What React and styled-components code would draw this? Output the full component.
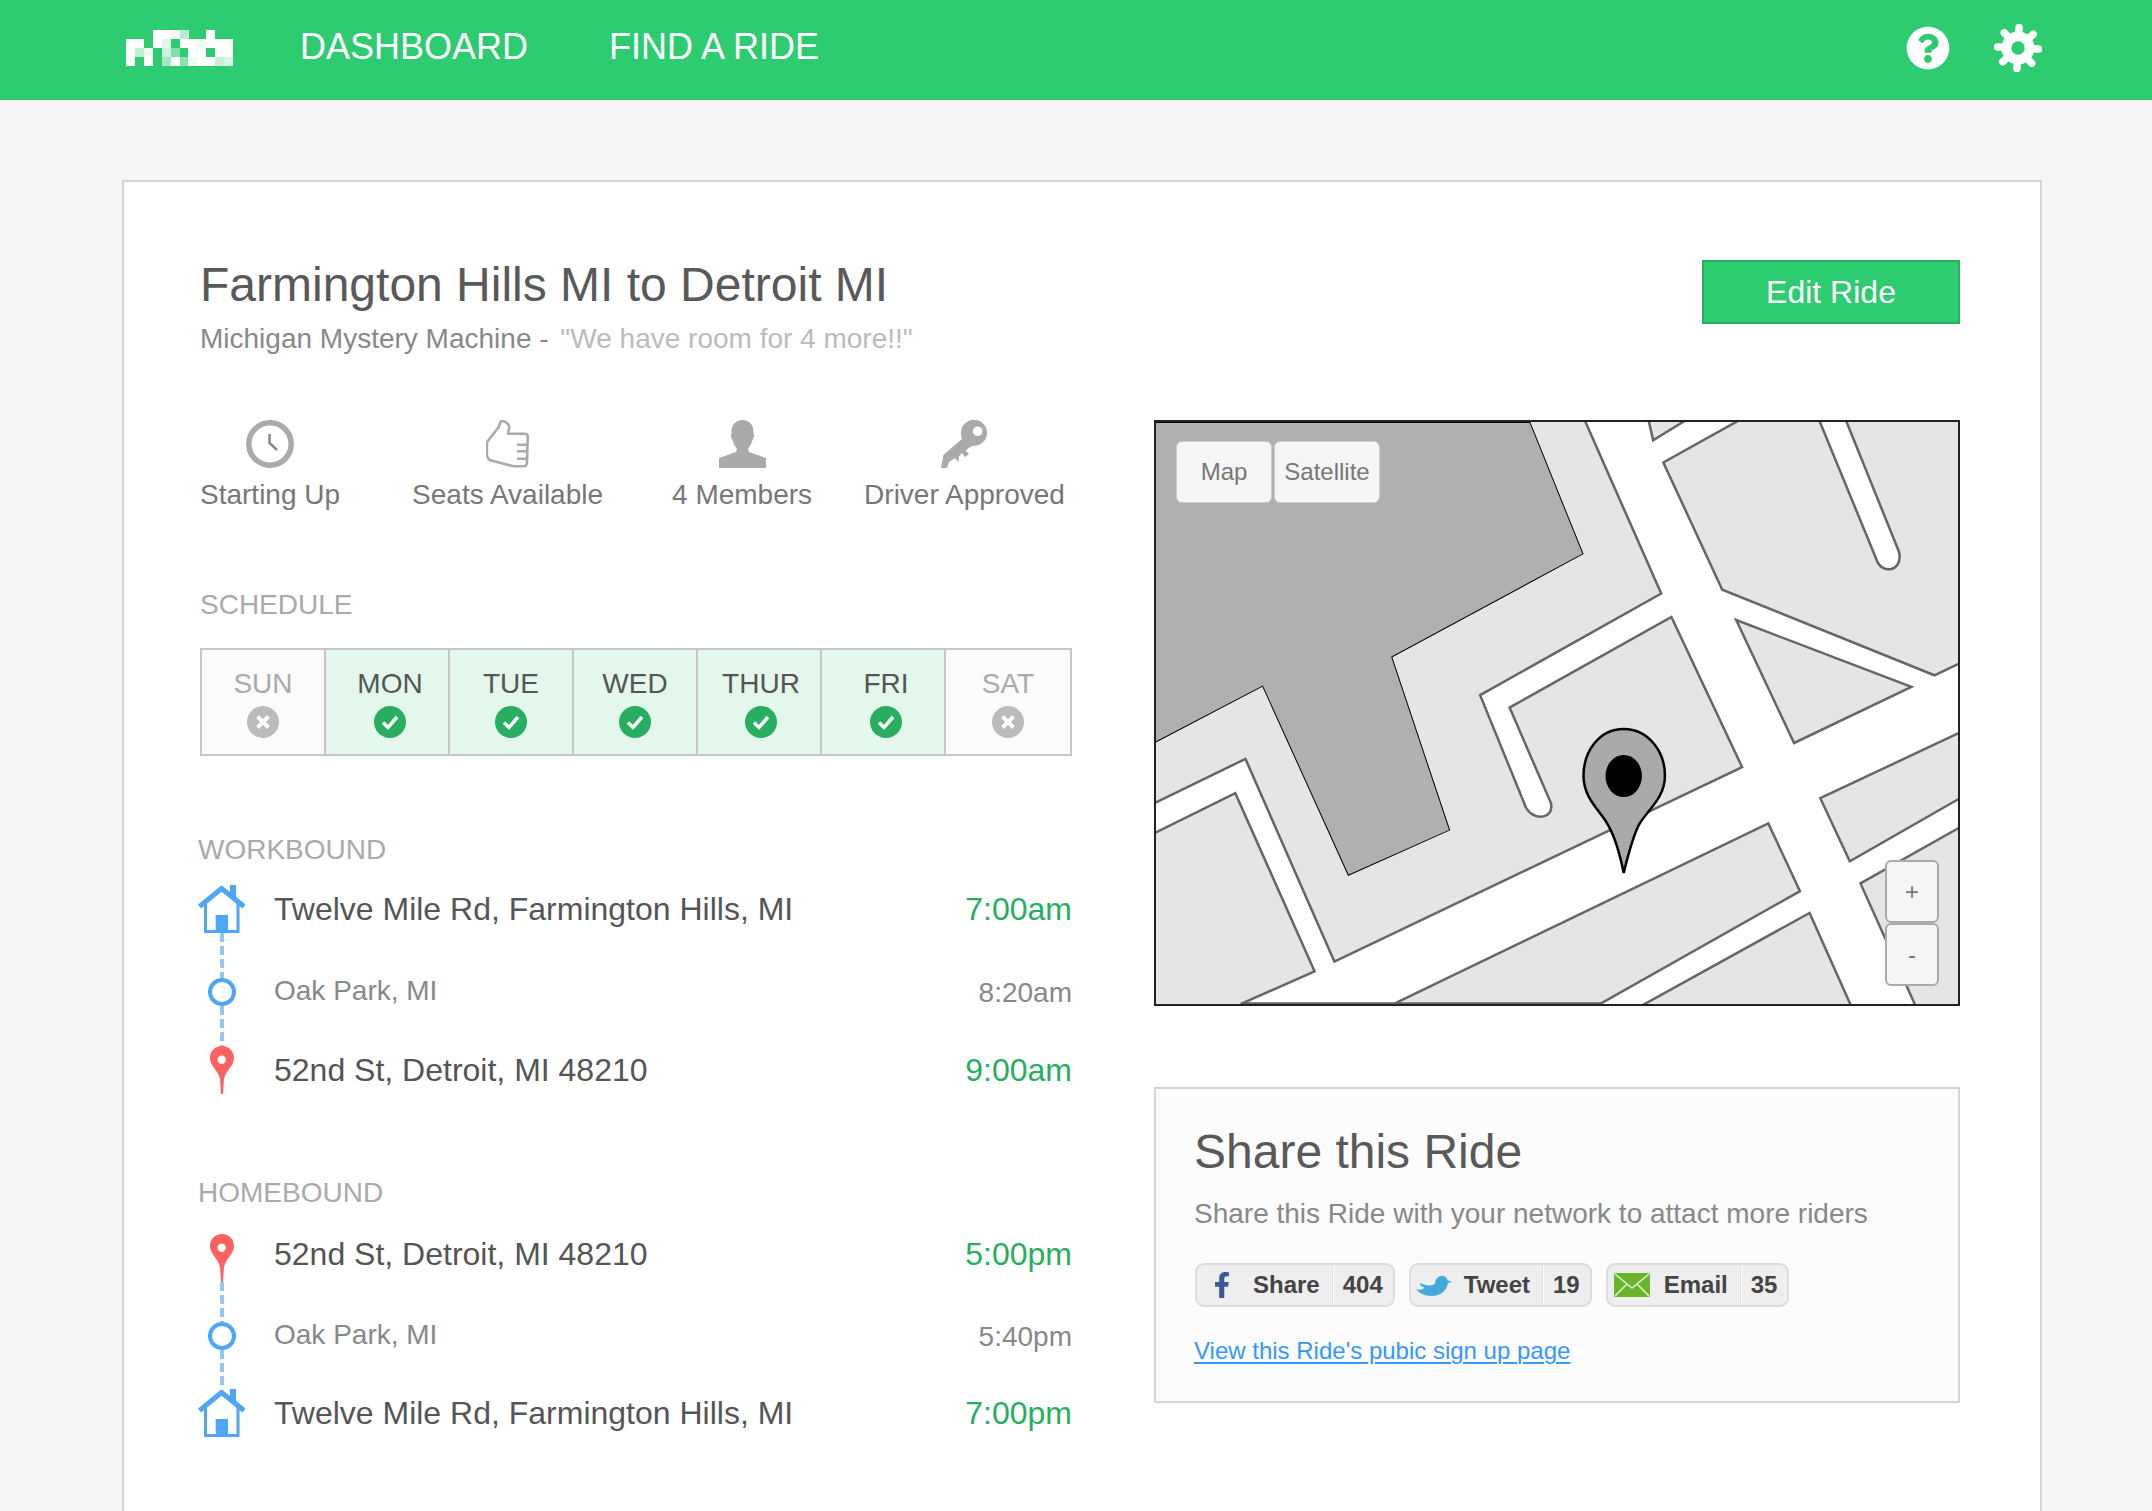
import React from "react";
import styled, { createGlobalStyle } from "styled-components";
import { FaFacebookF, FaQuestionCircle } from "react-icons/fa";

const GlobalStyle = createGlobalStyle`
  * {
    box-sizing: border-box;
  }
  html,
  body {
    margin: 0;
    height: 100%;
    overflow: hidden;
    background: #f5f5f5;
    font-family: "Liberation Sans", Arial, sans-serif;
  }
`;

const GRAY = "#aaaaaa";
const BLUE = "#4da6f8";
const NAV_GREEN = "#2ecc71";

const Nav = styled.nav`
  height: 100px;
  padding: 0 110px 4px 126px;
  display: flex;
  align-items: center;
  background: ${NAV_GREEN};
`;

const NavLink = styled.a`
  margin-left: ${(p) => p.$left}px;
  padding-bottom: 2px;
  font-size: 36px;
  line-height: 38px;
  color: #fff;
`;

const NavIcons = styled.div`
  margin-left: auto;
  display: flex;
  align-items: center;
  gap: 44px;
  color: #fff;
`;

const Card = styled.main`
  margin: 80px 0 0 122px;
  width: 1920px;
  min-height: 1400px;
  padding: 75px 80px 0 76px;
  background: #fff;
  border: 2px solid #d5d5d5;
`;

const Header = styled.header`
  display: flex;
  justify-content: space-between;
  align-items: flex-start;
  margin-bottom: 64px;
`;

const Title = styled.h1`
  margin: 0 0 9px;
  font-size: 48px;
  line-height: 56px;
  font-weight: 400;
  color: #595959;
`;

const Subtitle = styled.p`
  margin: 0;
  font-size: 28px;
  line-height: 34px;
  color: #888;
`;

const Quote = styled.span`
  margin-left: 4px;
  color: #bbb;
`;

const EditButton = styled.button`
  margin-top: 3px;
  width: 258px;
  height: 64px;
  padding: 0;
  background: ${NAV_GREEN};
  border: 2px solid #27ae60;
  font-family: inherit;
  font-size: 32px;
  color: #fff;
`;

const Columns = styled.div`
  display: flex;
  justify-content: space-between;
  align-items: flex-start;
`;

const LeftColumn = styled.section`
  width: 872px;
`;

const RightColumn = styled.aside`
  width: 806px;
`;

const StatusRow = styled.div`
  display: flex;
`;

const Status = styled.div`
  margin-right: ${(p) => p.$gap}px;
  display: flex;
  flex-direction: column;
  align-items: center;
  gap: 10px;
`;

const StatusIcon = styled.svg`
  display: block;
  height: 48px;
  width: ${(p) => p.$w}px;
`;

const StatusLabel = styled.span`
  font-size: 28px;
  line-height: 34px;
  color: #777;
  white-space: nowrap;
`;

const SectionLabel = styled.h2`
  margin: ${(p) => p.$top}px 0 ${(p) => p.$bottom}px;
  font-size: 28px;
  line-height: 34px;
  font-weight: 400;
  color: ${GRAY};
`;

const Schedule = styled.div`
  display: grid;
  grid-template-columns: repeat(7, 1fr);
  height: 108px;
  border: 2px solid #c6c6c6;
`;

const Day = styled.div`
  padding-top: 17px;
  padding-left: ${(p) => p.$shift * 2}px;
  display: flex;
  flex-direction: column;
  align-items: center;
  gap: 5px;
  background: ${(p) => (p.$on ? "#e3f7ec" : "#fbfbfb")};
  border-right: 2px solid #c6c6c6;
  font-size: 28px;
  line-height: 34px;
  color: ${(p) => (p.$on ? "#555" : "#aaa")};
  &:last-child {
    border-right: 0;
  }
`;

const RouteBlock = styled.div`
  margin-left: -2px;
  width: 874px;
`;

const Stop = styled.div`
  display: flex;
  align-items: center;
  height: ${(p) => (p.$minor ? 28 : 48)}px;
`;

const StopIcon = styled.div`
  width: 76px;
  flex: none;
`;

const StopText = styled.div`
  flex: 1;
  display: flex;
  justify-content: space-between;
  margin-bottom: ${(p) => (p.$lift ? 8 : 0)}px;
  font-size: ${(p) => (p.$minor ? 28 : 32)}px;
  line-height: ${(p) => (p.$minor ? 28 : 40)}px;
  color: ${(p) => (p.$minor ? "#888" : "#555")};
`;

const Time = styled.span`
  margin-top: ${(p) => (p.$minor ? 2 : 0)}px;
  color: ${(p) => (p.$minor ? "#888" : "#27ae60")};
`;

const Connector = styled.div`
  margin-left: 22px;
  width: 4px;
  height: ${(p) => p.$h}px;
  background: repeating-linear-gradient(to bottom, #90c8f8 0 9px, transparent 9px 13px);
`;

const Waypoint = styled.div`
  margin-left: 10px;
  width: 28px;
  height: 28px;
  border: 4px solid ${BLUE};
  border-radius: 50%;
`;

const MapBox = styled.div`
  position: relative;
  height: 586px;
  background: #fff;
  border: 2px solid #222;
  overflow: hidden;
`;

const MapDrawing = styled.svg`
  display: block;
  width: 100%;
  height: 100%;
`;

const MapTabs = styled.div`
  position: absolute;
  top: 19px;
  left: 20px;
  display: flex;
  gap: 2px;
`;

const MapTab = styled.div`
  width: ${(p) => p.$w}px;
  height: 62px;
  display: flex;
  align-items: center;
  justify-content: center;
  background: #f5f5f5;
  border: 1px solid #ccc;
  border-radius: 6px;
  font-size: 24px;
  color: #777;
`;

const ZoomControl = styled.div`
  position: absolute;
  right: 19px;
  bottom: 18px;
  display: flex;
  flex-direction: column;
`;

const ZoomButton = styled.div`
  width: 54px;
  height: 63px;
  display: flex;
  align-items: center;
  justify-content: center;
  background: #f5f5f5;
  border: 2px solid #aaa;
  border-radius: 6px;
  font-size: 24px;
  color: #777;
`;

const ShareBox = styled.div`
  margin-top: 81px;
  height: 316px;
  padding: 35px 0 0 38px;
  background: #fcfcfc;
  border: 2px solid #d5d5d5;
`;

const ShareTitle = styled.h2`
  margin: 0 0 17px;
  font-size: 48px;
  line-height: 56px;
  font-weight: 400;
  color: #595959;
`;

const ShareText = styled.p`
  margin: 0 0 32px;
  font-size: 28px;
  line-height: 34px;
  color: #888;
`;

const ShareButtons = styled.div`
  display: flex;
  gap: 14px;
  margin: 0 0 28px 1px;
`;

const ShareButton = styled.div`
  display: flex;
  align-items: center;
  height: 44px;
  background: #eee;
  border: 2px solid #ddd;
  border-radius: 9px;
  font-size: 24px;
  font-weight: 700;
  color: #444;
`;

const ShareIcon = styled.span`
  width: ${(p) => p.$w}px;
  padding-right: 7px;
  display: flex;
  justify-content: center;
  color: ${(p) => p.$color};
`;

const ShareLabel = styled.span`
  padding-right: 12px;
`;

const ShareCount = styled.span`
  height: 100%;
  padding: 0 10px;
  display: flex;
  align-items: center;
  border-left: 1px solid #ddd;
  box-shadow: inset 1px 0 #fff;
`;

const PublicLink = styled.a`
  display: block;
  font-size: 24px;
  line-height: 32px;
  color: #3399ff;
  text-decoration: underline;
  text-decoration-thickness: 2px;
  text-underline-offset: 3px;
`;

// the logo in the picture is pixelated, so it is drawn as cells
const LOGO_ROWS = [
  ["", "", "", "#fff", "#fff", "#f0fbf5", "#b8ecd0", "", "", "#fff", "", ""],
  ["#fff", "#fff", "", "#fff", "#e0f7eb", "", "#fff", "#fff", "#f0fbf5", "#fff", "#fff", "#fff"],
  ["#fff", "#c0eed5", "#f0fbf5", "", "#cdf2de", "#7fe0ab", "", "#fff", "#fff", "", "#fff", "#fff"],
  ["#fff", "", "#fff", "", "#a5e8c3", "#fff", "#8ae2b2", "#f0fbf5", "#fff", "#fff", "#c8f1da", "#d8f5e6"],
];

const Logo = () => (
  <svg width="107" height="36" viewBox="0 0 107 36" shapeRendering="crispEdges">
    {LOGO_ROWS.map((row, y) =>
      row.map((fill, x) => fill && <rect key={`${x}-${y}`} x={x * 8.92} y={y * 9} width="9" height="9" fill={fill} />)
    )}
  </svg>
);

const Gear = () => (
  <svg width="48" height="48" viewBox="0 0 48 48">
    {[0, 45, 90, 135, 180, 225, 270, 315].map((a) => (
      <line key={a} x1="24" y1="12" x2="24" y2="3.5" stroke="#fff" strokeWidth="7.5" strokeLinecap="round" transform={`rotate(${a + 3} 24 24)`} />
    ))}
    <circle cx="24" cy="24" r="16.5" fill="#fff" />
    <circle cx="24" cy="24" r="6.7" fill={NAV_GREEN} />
  </svg>
);

const Clock = () => (
  <StatusIcon $w={48} viewBox="0 0 48 48">
    <circle cx="24" cy="24" r="21.2" fill="none" stroke={GRAY} strokeWidth="5.5" />
    <path d="M23.5 14V23L31 30" fill="none" stroke="#888" strokeWidth="2.5" />
  </StatusIcon>
);

const Thumb = () => (
  <StatusIcon $w={43} viewBox="0 0 43 48">
    <path
      d="M22 13.7H39C41 13.7 41.8 15 41.7 17L41 42C41 45 40 46.3 37.7 46.3H27.7L11 42L4.3 40.3C2 39 .8 36.5 .8 33.7L1 22L12.7 7L14.3 2.5C15 1 16.5 .8 17.7 1.2C21 2.5 23.5 4.5 23.3 7.5Z"
      fill="none"
      stroke={GRAY}
      strokeWidth="2.6"
      strokeLinejoin="round"
    />
    <path d="M31 24.7H41M31 31.3H41M31 38.7H41" stroke={GRAY} strokeWidth="2.6" />
  </StatusIcon>
);

const Person = () => (
  <StatusIcon $w={47} viewBox="0 0 47 48">
    <path
      d="M23.5 0C31 0 35 6 34.5 13C35.5 15 35 18 33.5 20C32.5 24 30.5 27 29 29L30 32L47 38V48H0V38L17 32L18 29C16.5 27 14.5 24 13.5 20C12 18 11.5 15 12.5 13C12 6 16 0 23.5 0Z"
      fill={GRAY}
    />
  </StatusIcon>
);

const Key = () => (
  <StatusIcon $w={47} viewBox="0 0 47 48">
    <path
      fillRule="evenodd"
      d="M0 48L2.3 35L21 19C20 16 20 14 20 12.7A13 13 0 1 1 32 25.7L29 27L24.5 30.5L28 34L24 37L21 33L18 36L17.5 42L14 38L8 42L6 48ZM41.5 11.3A4.8 4.8 0 1 0 31.9 11.3A4.8 4.8 0 1 0 41.5 11.3Z"
      fill={GRAY}
    />
  </StatusIcon>
);

const DayMark = ({ on }) => (
  <svg width="32" height="32" viewBox="0 0 32 32">
    <circle cx="16" cy="16" r="16" fill={on ? "#27ae60" : "#bbb"} />
    {on ? (
      <path d="M9 16.5L14 21.5L23 11" fill="none" stroke="#fff" strokeWidth="3.5" />
    ) : (
      <path d="M10.5 10.5L21.5 21.5M21.5 10.5L10.5 21.5" fill="none" stroke="#fff" strokeWidth="4" />
    )}
  </svg>
);

const House = () => (
  <svg width="48" height="48" viewBox="0 0 48 48" style={{ display: "block" }}>
    <path d="M32 0H38V14H32Z" fill={BLUE} />
    <path d="M1.5 21.5L23.5 3.5L46 21.5" fill="none" stroke={BLUE} strokeWidth="5" />
    <path d="M7.5 19V46.5H40V19" fill="none" stroke={BLUE} strokeWidth="3" />
    <path d="M17.7 30H30V46H17.7Z" fill={BLUE} />
  </svg>
);

const Pin = () => (
  <svg width="48" height="48" viewBox="0 0 48 48" style={{ display: "block" }}>
    <path
      d="M24 0C31 0 36 5 36 12C36 20 28 24 26 33L25 48H23L22 33C20 24 12 20 12 12C12 5 17 0 24 0Z"
      fill="#ff6060"
    />
    <circle cx="23.7" cy="13.7" r="4.2" fill="#fff" />
  </svg>
);

const Envelope = () => (
  <svg width="36" height="24" viewBox="0 0 36 24">
    <rect width="36" height="24" rx="1.5" fill="#6ab42b" />
    <path d="M1 1L18 15L35 1M1 23L13 11M35 23L23 11" fill="none" stroke="#e4f3d6" strokeWidth="1.5" />
  </svg>
);

const Bird = () => (
  <svg width="36" height="23" viewBox="0 0 36 23">
    <path
      d="M0 15C5 17 8 15 8 13C5 13 4 11 4 9C10 12 16 12 19 10C19 4 24 1 28 2C30 3 32 5 31 6L36 8L32 9C31 15 26 22 16 22C8 22 3 19 0 15Z"
      fill="currentColor"
    />
  </svg>
);

// map is traced in its own coordinates and stretched to the box
const BLOCKS = [
  "M-20 10H825L973 472L635 733L717 1010C727 1060 775 1055 767 1010L690 765L992 532L1124 918L363 1418L197 897L-20 1042Z",
  "M-20 1120L178 985L326 1443L190 1526V1600H-20Z",
  "M945 0L958 78L1050 0Z",
  "M1140 10L977 135L1087 462L1483 682L1560 632V0H1310L1417 365C1425 415 1385 425 1375 385L1260 0Z",
  "M1113 540L1440 712L1221 856Z",
  "M1270 998L1560 810V975L1325 1160Z",
  "M1345 1217L1560 1050V1600H1470Z",
  "M1173 1063L1232 1237L860 1526H475Z",
  "M1250 1293L1330 1540H925Z",
];

const MapArt = () => (
  <MapDrawing viewBox="30 31 1497 1496" preserveAspectRatio="none">
    {BLOCKS.map((d) => (
      <path key={d} d={d} fill="#e5e5e5" stroke="#666" strokeWidth="2.5" vectorEffect="non-scaling-stroke" />
    ))}
    <path d="M190 1526H475" stroke="#666" strokeWidth="2.5" vectorEffect="non-scaling-stroke" />
    <path
      d="M0 32H728L827 370L470 635L578 1080L389 1196L229 710L0 875Z"
      fill="#b0b0b0"
      stroke="#000"
      strokeWidth="1"
      vectorEffect="non-scaling-stroke"
    />
    <path
      d="M903 820C950 820 980 880 980 940C980 1000 945 1030 930 1070C920 1100 910 1150 903 1190C897 1150 887 1100 875 1070C860 1030 828 1000 828 940C828 880 856 820 903 820Z"
      fill="#aaa"
      stroke="#000"
      strokeWidth="2.5"
      vectorEffect="non-scaling-stroke"
    />
    <ellipse cx="903" cy="941" rx="34" ry="54" fill="#000" />
  </MapDrawing>
);

const DAYS = [
  ["SUN", false, 0],
  ["MON", true, 3],
  ["TUE", true, -1],
  ["WED", true, -1],
  ["THUR", true, 2],
  ["FRI", true, 3],
  ["SAT", false, 0],
];

const Route = ({ first, firstIcon, mid, last, lastIcon, lift, gaps }) => (
  <RouteBlock>
    <Stop>
      <StopIcon>{firstIcon}</StopIcon>
      <StopText $lift={lift}>
        <span>{first[0]}</span>
        <Time>{first[1]}</Time>
      </StopText>
    </Stop>
    <Connector $h={gaps[0]} />
    <Stop $minor>
      <StopIcon>
        <Waypoint />
      </StopIcon>
      <StopText $minor>
        <span>{mid[0]}</span>
        <Time $minor>{mid[1]}</Time>
      </StopText>
    </Stop>
    <Connector $h={gaps[1]} />
    <Stop>
      <StopIcon>{lastIcon}</StopIcon>
      <StopText>
        <span>{last[0]}</span>
        <Time>{last[1]}</Time>
      </StopText>
    </Stop>
  </RouteBlock>
);

export default function App() {
  return (
    <>
      <GlobalStyle />
      <Nav>
        <Logo />
        <NavLink $left={67}>DASHBOARD</NavLink>
        <NavLink $left={81}>FIND A RIDE</NavLink>
        <NavIcons>
          <FaQuestionCircle size={44} />
          <Gear />
        </NavIcons>
      </Nav>
      <Card>
        <Header>
          <div>
            <Title>Farmington Hills MI to Detroit MI</Title>
            <Subtitle>
              Michigan Mystery Machine - <Quote>"We have room for 4 more!!"</Quote>
            </Subtitle>
          </div>
          <EditButton>Edit Ride</EditButton>
        </Header>
        <Columns>
          <LeftColumn>
            <StatusRow>
              <Status $gap={72}>
                <Clock />
                <StatusLabel>Starting Up</StatusLabel>
              </Status>
              <Status $gap={69}>
                <Thumb />
                <StatusLabel>Seats Available</StatusLabel>
              </Status>
              <Status $gap={52}>
                <Person />
                <StatusLabel>4 Members</StatusLabel>
              </Status>
              <Status $gap={0}>
                <Key />
                <StatusLabel>Driver Approved</StatusLabel>
              </Status>
            </StatusRow>
            <SectionLabel $top={76} $bottom={26}>SCHEDULE</SectionLabel>
            <Schedule>
              {DAYS.map(([name, on, shift]) => (
                <Day key={name} $on={on} $shift={shift}>
                  {name}
                  <DayMark on={on} />
                </Day>
              ))}
            </Schedule>
            <RouteBlock>
              <SectionLabel $top={77} $bottom={18}>WORKBOUND</SectionLabel>
            </RouteBlock>
            <Route
              first={["Twelve Mile Rd, Farmington Hills, MI", "7:00am"]}
              firstIcon={<House />}
              mid={["Oak Park, MI", "8:20am"]}
              last={["52nd St, Detroit, MI 48210", "9:00am"]}
              lastIcon={<Pin />}
              gaps={[45, 40]}
            />
            <RouteBlock>
              <SectionLabel $top={82} $bottom={24}>HOMEBOUND</SectionLabel>
            </RouteBlock>
            <Route
              first={["52nd St, Detroit, MI 48210", "5:00pm"]}
              firstIcon={<Pin />}
              mid={["Oak Park, MI", "5:40pm"]}
              last={["Twelve Mile Rd, Farmington Hills, MI", "7:00pm"]}
              lastIcon={<House />}
              lift
              gaps={[40, 39]}
            />
          </LeftColumn>
          <RightColumn>
            <MapBox>
              <MapArt />
              <MapTabs>
                <MapTab $w={96}>Map</MapTab>
                <MapTab $w={106}>Satellite</MapTab>
              </MapTabs>
              <ZoomControl>
                <ZoomButton>+</ZoomButton>
                <ZoomButton>-</ZoomButton>
              </ZoomControl>
            </MapBox>
            <ShareBox>
              <ShareTitle>Share this Ride</ShareTitle>
              <ShareText>Share this Ride with your network to attact more riders</ShareText>
              <ShareButtons>
                <ShareButton>
                  <ShareIcon $w={56} $color="#3b5998">
                    <FaFacebookF size={26} />
                  </ShareIcon>
                  <ShareLabel>Share</ShareLabel>
                  <ShareCount>404</ShareCount>
                </ShareButton>
                <ShareButton>
                  <ShareIcon $w={53} $color="#44aadd">
                    <Bird />
                  </ShareIcon>
                  <ShareLabel>Tweet</ShareLabel>
                  <ShareCount>19</ShareCount>
                </ShareButton>
                <ShareButton>
                  <ShareIcon $w={56}>
                    <Envelope />
                  </ShareIcon>
                  <ShareLabel>Email</ShareLabel>
                  <ShareCount>35</ShareCount>
                </ShareButton>
              </ShareButtons>
              <PublicLink>View this Ride's pubic sign up page</PublicLink>
            </ShareBox>
          </RightColumn>
        </Columns>
      </Card>
    </>
  );
}
